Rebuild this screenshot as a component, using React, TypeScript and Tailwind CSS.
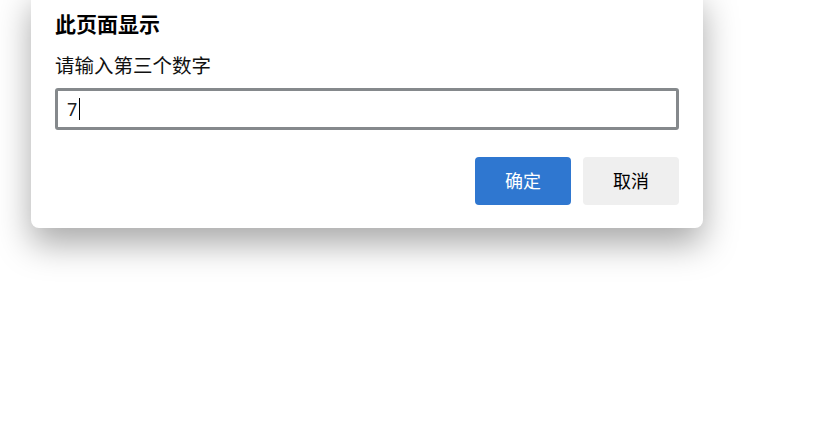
export default function App() {
  return (
    <div
      className="w-[822px] h-[440px] bg-white overflow-hidden"
      style={{ fontFamily: '"Noto Sans", "Noto Sans CJK SC", sans-serif' }}
    >
      <div className="ml-[31px] mt-[-12px] w-[672px] bg-white rounded-lg shadow-[0_16px_34px_rgba(0,0,0,0.34)] px-6 pt-6 pb-[23px]">
        <h1 className="text-[21px] leading-6 font-bold text-black">此页面显示</h1>
        <p className="mt-[18px] text-[19.5px] leading-6 text-[#111]">请输入第三个数字</p>
        <div className="mt-[10px] h-[42px] border-[3px] border-[#85898c] rounded-[3px] flex items-center pl-[9px]">
          <span className="text-[18px] text-[#202124]">7</span>
          <span className="ml-[2px] w-px h-[22px] bg-black" />
        </div>
        <div className="mt-[27px] flex justify-end gap-3">
          <button className="w-24 h-12 rounded bg-[#2f77d0] text-white text-[18px]">确定</button>
          <button className="w-24 h-12 rounded bg-[#efefef] text-black text-[18px]">取消</button>
        </div>
      </div>
    </div>
  );
}
